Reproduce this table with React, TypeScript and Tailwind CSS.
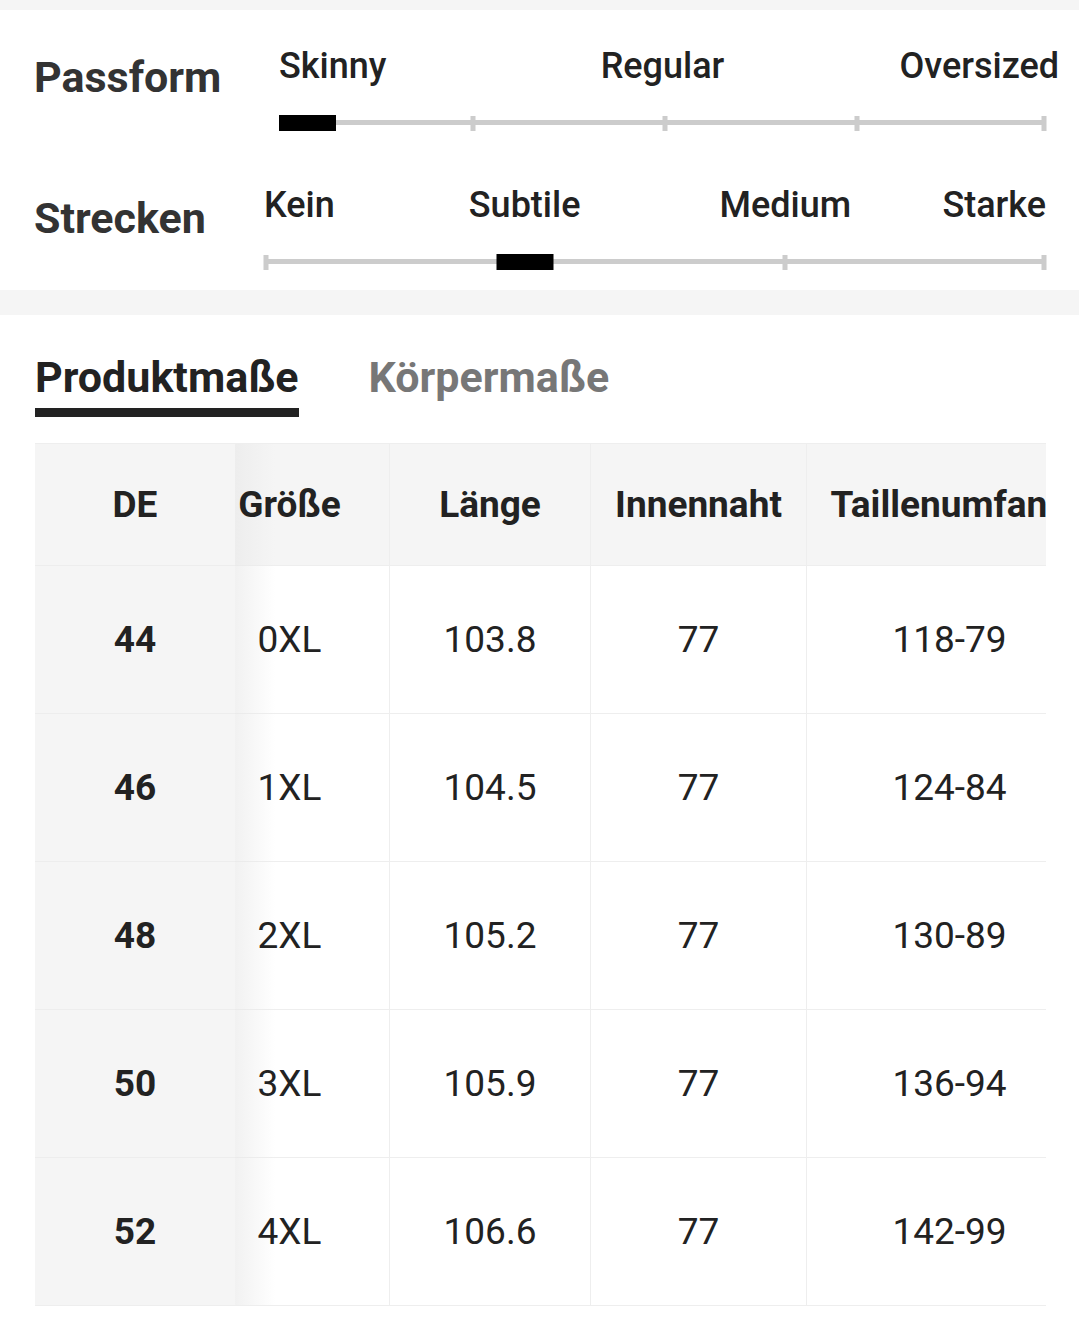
import React from 'react';

const font = { fontFamily: 'Roboto, "Noto Sans", sans-serif' };

type Mark = { label: string; pos: number; align: 'start' | 'center' | 'end' };

function Scale({ marks, active, ticks }: { marks: Mark[]; active: number; ticks: number[] }) {
    return (
        <div className="relative flex-1 h-full">
            {/* labels */}
            {marks.map((m) => (
                <span
                    key={m.label}
                    className={
                        'absolute top-0 text-[36px] font-medium leading-none text-[#222] whitespace-nowrap ' +
                        (m.align === 'start' ? '' : m.align === 'center' ? '-translate-x-1/2' : '-translate-x-full')
                    }
                    style={{ left: `${m.pos * 100}%` }}
                >
                    {m.label}
                </span>
            ))}
            {/* track */}
            <div className="absolute left-0 right-0 top-[72px] h-[5px] bg-[#cccccc]" />
            {ticks.map((t) => (
                <div
                    key={t}
                    className="absolute top-[68px] w-[5px] h-[15px] bg-[#cccccc] -translate-x-1/2"
                    style={{ left: `calc(${t * 100}% + ${t === 0 ? 2 : t === 1 ? -2 : 0}px)` }}
                />
            ))}
            <div
                className={'absolute top-[67px] w-[57px] h-[16px] bg-black ' + (active === 0 ? '' : '-translate-x-1/2')}
                style={{ left: `${active * 100}%` }}
            />
        </div>
    );
}

const rows = [
    ['44', '0XL', '103.8', '77', '118-79'],
    ['46', '1XL', '104.5', '77', '124-84'],
    ['48', '2XL', '105.2', '77', '130-89'],
    ['50', '3XL', '105.9', '77', '136-94'],
    ['52', '4XL', '106.6', '77', '142-99'],
];

const cols = [
    { title: 'Größe', w: 'w-[200px]' },
    { title: 'Länge', w: 'w-[201px]' },
    { title: 'Innennaht', w: 'w-[216px]' },
    { title: 'Taillenumfang', w: 'w-[286px]' },
];

export default function App() {
    return (
        <div className="w-[1079px] min-h-[1319px] bg-white" style={font}>
            <div className="h-[10px] bg-[#f5f5f5]" />

            {/* Fit section */}
            <section className="h-[280px] bg-white">
                <div className="flex h-[140px] pt-[38px]">
                    <div className="w-[279px] pl-[34px] pt-[8px] text-[43px] font-bold leading-none text-[#333]">
                        Passform
                    </div>
                    <div className="w-[767px] h-full">
                        <Scale
                            marks={[
                                { label: 'Skinny', pos: 0, align: 'start' },
                                { label: 'Regular', pos: 0.5, align: 'center' },
                                { label: 'Oversized', pos: 1.017, align: 'end' },
                            ]}
                            active={0}
                            ticks={[0.253, 0.503, 0.754, 1]}
                        />
                    </div>
                </div>
                <div className="flex h-[140px] pt-[37px]">
                    <div className="w-[264px] pl-[34px] pt-[10px] text-[43px] font-bold leading-none text-[#333]">
                        Strecken
                    </div>
                    <div className="w-[782px] h-full">
                        <Scale
                            marks={[
                                { label: 'Kein', pos: 0, align: 'start' },
                                { label: 'Subtile', pos: 1 / 3, align: 'center' },
                                { label: 'Medium', pos: 2 / 3, align: 'center' },
                                { label: 'Starke', pos: 1, align: 'end' },
                            ]}
                            active={1 / 3}
                            ticks={[0, 2 / 3, 1]}
                        />
                    </div>
                </div>
            </section>

            <div className="h-[25px] bg-[#f5f5f5]" />

            {/* Tabs */}
            <div className="flex gap-[70px] px-[35px] pt-[41px]">
                <div className="flex flex-col">
                    <span className="text-[43px] font-bold leading-none text-[#222]">Produktmaße</span>
                    <span className="mt-[9px] h-[9px] bg-[#222]" />
                </div>
                <span className="text-[43px] font-bold leading-none text-[#777]">Körpermaße</span>
            </div>

            {/* Table */}
            <div className="mx-[35px] mt-[26px] w-[1011px] flex overflow-hidden border-t border-[#eeeeee]">
                {/* sticky first column */}
                <div className="relative w-[200px] shrink-0 bg-[#f5f5f5]">
                    <div className="h-[121px] flex items-center justify-center text-[37px] font-bold text-[#222]">DE</div>
                    {rows.map((r) => (
                        <div
                            key={r[0]}
                            className="h-[148px] flex items-center justify-center border-t border-[#ededed] text-[37px] font-bold text-[#222]"
                        >
                            {r[0]}
                        </div>
                    ))}
                </div>

                {/* scrolled columns */}
                <div className="relative flex-1 overflow-hidden">
                    <div className="absolute top-0 bottom-0 left-0 w-[40px] bg-gradient-to-r from-[#e8e8e8] to-transparent opacity-60" />
                    <div className="flex -ml-[45px]">
                        {cols.map((c, ci) => (
                            <div key={c.title} className={c.w + ' shrink-0 border-r border-[#eeeeee]'}>
                                <div className="h-[121px] bg-[#f5f5f5] flex items-center justify-center text-[37px] font-bold text-[#222] whitespace-nowrap">
                                    <span className="relative">{c.title}</span>
                                </div>
                                {rows.map((r) => (
                                    <div
                                        key={r[0]}
                                        className="h-[148px] flex items-center justify-center border-t border-[#eeeeee] text-[37px] text-[#222]"
                                    >
                                        <span className="relative">{r[ci + 1]}</span>
                                    </div>
                                ))}
                            </div>
                        ))}
                    </div>
                </div>
            </div>
            <div className="mx-[35px] w-[1011px] h-px bg-[#eeeeee]" />
        </div>
    );
}
